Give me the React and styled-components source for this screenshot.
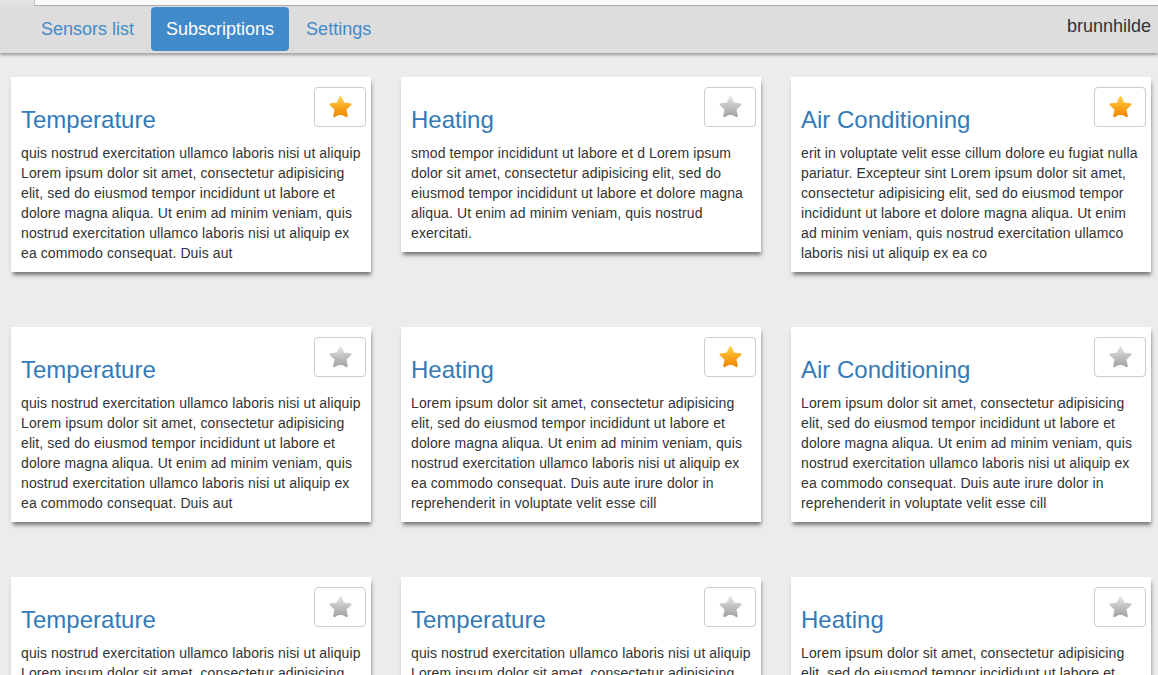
import React from 'react'
import styled, { createGlobalStyle } from 'styled-components'

const GlobalStyle = createGlobalStyle`
  html, body {
    margin: 0;
    padding: 0;
    background: #ececec;
    font-family: "Liberation Sans", Arial, sans-serif;
    color: #333;
  }
`

const LOREM_A = 'quis nostrud exercitation ullamco laboris nisi ut aliquip Lorem ipsum dolor sit amet, consectetur adipisicing elit, sed do eiusmod tempor incididunt ut labore et dolore magna aliqua. Ut enim ad minim veniam, quis nostrud exercitation ullamco laboris nisi ut aliquip ex ea commodo consequat. Duis aut'
const LOREM_B = 'smod tempor incididunt ut labore et d Lorem ipsum dolor sit amet, consectetur adipisicing elit, sed do eiusmod tempor incididunt ut labore et dolore magna aliqua. Ut enim ad minim veniam, quis nostrud exercitati.'
const LOREM_C = 'erit in voluptate velit esse cillum dolore eu fugiat nulla pariatur. Excepteur sint Lorem ipsum dolor sit amet, consectetur adipisicing elit, sed do eiusmod tempor incididunt ut labore et dolore magna aliqua. Ut enim ad minim veniam, quis nostrud exercitation ullamco laboris nisi ut aliquip ex ea co'
const LOREM_D = 'Lorem ipsum dolor sit amet, consectetur adipisicing elit, sed do eiusmod tempor incididunt ut labore et dolore magna aliqua. Ut enim ad minim veniam, quis nostrud exercitation ullamco laboris nisi ut aliquip ex ea commodo consequat. Duis aute irure dolor in reprehenderit in voluptate velit esse cill'

const sensors = [
  { name: 'Temperature', text: LOREM_A, fav: true },
  { name: 'Heating', text: LOREM_B, fav: false },
  { name: 'Air Conditioning', text: LOREM_C, fav: true },
  { name: 'Temperature', text: LOREM_A, fav: false },
  { name: 'Heating', text: LOREM_D, fav: true },
  { name: 'Air Conditioning', text: LOREM_D, fav: false },
  { name: 'Temperature', text: LOREM_A, fav: false },
  { name: 'Temperature', text: LOREM_A, fav: false },
  { name: 'Heating', text: LOREM_D, fav: false },
]

function Star({ on, id }) {
  const grad = `star-${id}`
  return (
    <svg width="25" height="24" viewBox="0 0 24 23">
      <defs>
        <linearGradient id={grad} x1="0" y1="0" x2="0" y2="1">
          {on ? (
            <>
              <stop offset="0" stopColor="#ffd04a" />
              <stop offset="0.55" stopColor="#f8a51c" />
              <stop offset="1" stopColor="#ee8a06" />
            </>
          ) : (
            <>
              <stop offset="0" stopColor="#e4e4e4" />
              <stop offset="0.55" stopColor="#bdbdbd" />
              <stop offset="1" stopColor="#a6a6a6" />
            </>
          )}
        </linearGradient>
      </defs>
      <path
        d="M12 2.2 L14.9 8.3 L21.5 9.1 L16.6 13.6 L17.9 20.2 L12 16.9 L6.1 20.2 L7.4 13.6 L2.5 9.1 L9.1 8.3 Z"
        fill={`url(#${grad})`}
        stroke={`url(#${grad})`}
        strokeWidth="2.2"
        strokeLinejoin="round"
      />
    </svg>
  )
}

function App() {
  return (
    <>
      <GlobalStyle />
      <TopStrip>
        <TopField />
      </TopStrip>
      <Navbar>
        <Nav>
          <NavItem>Sensors list</NavItem>
          <NavItem active>Subscriptions</NavItem>
          <NavItem>Settings</NavItem>
        </Nav>
        <User>brunnhilde</User>
      </Navbar>
      <Grid>
        {sensors.map((s, i) => (
          <Card key={i}>
            <CardHeader>
              <Title>{s.name}</Title>
              <StarButton>
                <Star on={s.fav} id={i} />
              </StarButton>
            </CardHeader>
            <Body>{s.text}</Body>
          </Card>
        ))}
      </Grid>
    </>
  )
}

export default App

const TopStrip = styled.div`
  height: 6px;
  background: #e2e2e2;
  display: flex;
`
const TopField = styled.div`
  flex: 1;
  margin-left: 34px;
  background: #fafafa;
  border-left: 1px solid #c4c4c4;
  border-bottom: 1px solid #b0b0b0;
`
const Navbar = styled.div`
  height: 46px;
  background: #dddddd;
  box-shadow: 0 2px 3px rgba(0, 0, 0, 0.35);
  display: flex;
  align-items: flex-start;
  justify-content: space-between;
  padding: 1px 7px 0 26px;
  position: relative;
  z-index: 1;
`
const Nav = styled.div`
  display: flex;
  gap: 2px;
`
const NavItem = styled.div`
  font-size: 18px;
  line-height: 24px;
  padding: 10px 15px;
  border-radius: 4px;
  color: ${p => (p.active ? '#fff' : '#428bca')};
  background: ${p => (p.active ? '#428bca' : 'transparent')};
`
const User = styled.div`
  font-size: 18px;
  line-height: 24px;
  padding: 7px 0;
  color: #333;
`
const Grid = styled.div`
  display: grid;
  grid-template-columns: repeat(3, 360px);
  grid-auto-rows: 250px;
  column-gap: 30px;
  align-items: start;
  padding: 24px 11px 0;
`
const Card = styled.div`
  background: #fff;
  padding: 10px 10px 9px;
  box-shadow: 1px 4px 4px -1px rgba(0, 0, 0, 0.5);
`
const CardHeader = styled.div`
  display: flex;
  justify-content: space-between;
  align-items: flex-start;
`
const Title = styled.h3`
  margin: 20px 0 10px;
  font-size: 24px;
  line-height: 1.1;
  font-weight: 400;
  color: #337ab7;
`
const StarButton = styled.button`
  width: 52px;
  height: 40px;
  margin-right: -5px;
  padding: 0;
  background: #fff;
  border: 1px solid #ccc;
  border-radius: 4px;
  display: flex;
  align-items: center;
  justify-content: center;
`
const Body = styled.p`
  margin: 0;
  font-size: 14px;
  letter-spacing: 0.1px;
  line-height: 20px;
  color: #333;
`
